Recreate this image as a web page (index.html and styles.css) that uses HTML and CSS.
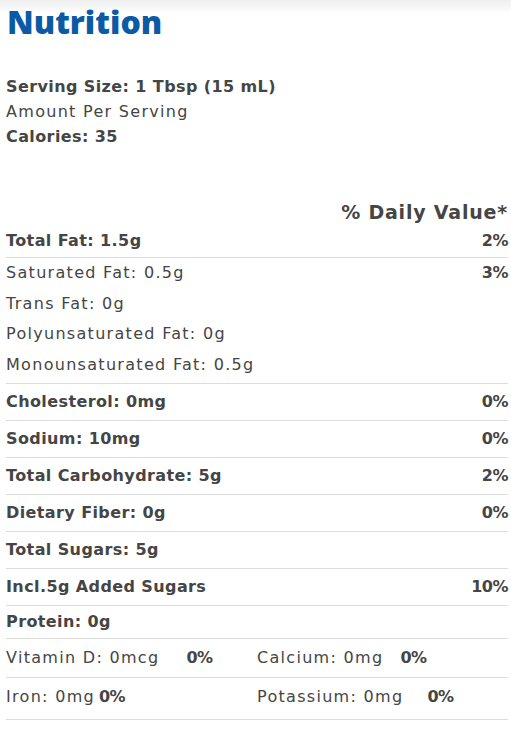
FILE: index.html
```html
<!DOCTYPE html>
<html lang="en">
<head>
<meta charset="utf-8">
<title>Nutrition</title>
<link rel="stylesheet" href="styles.css">
</head>
<body>
<div class="topfade"></div>
<main class="panel">
  <h1 class="title">Nutrition</h1>
  <div class="serving">
    <div class="b">Serving Size: 1 Tbsp (15 mL)</div>
    <div>Amount Per Serving</div>
    <div class="b">Calories: 35</div>
  </div>
  <div class="dv-head">% Daily Value*</div>
  <div class="row row-first"><span class="b">Total Fat: 1.5g</span><span class="b pct">2%</span></div>
  <div class="subgroup">
    <div class="sub"><span>Saturated Fat: 0.5g</span><span class="b pct">3%</span></div>
    <div class="sub"><span>Trans Fat: 0g</span></div>
    <div class="sub"><span>Polyunsaturated Fat: 0g</span></div>
    <div class="sub"><span>Monounsaturated Fat: 0.5g</span></div>
  </div>
  <div class="row"><span class="b">Cholesterol: 0mg</span><span class="b pct">0%</span></div>
  <div class="row"><span class="b">Sodium: 10mg</span><span class="b pct">0%</span></div>
  <div class="row"><span class="b">Total Carbohydrate: 5g</span><span class="b pct">2%</span></div>
  <div class="row"><span class="b">Dietary Fiber: 0g</span><span class="b pct">0%</span></div>
  <div class="row"><span class="b">Total Sugars: 5g</span></div>
  <div class="row"><span class="b">Incl.5g Added Sugars</span><span class="b pct">10%</span></div>
  <div class="row row-protein"><span class="b">Protein: 0g</span></div>
  <div class="row row-vit">
    <div class="cell"><span>Vitamin D: 0mcg</span><span class="b pct gap-vd">0%</span></div>
    <div class="cell"><span>Calcium: 0mg</span><span class="b pct gap-ca">0%</span></div>
  </div>
  <div class="row row-iron">
    <div class="cell"><span>Iron: 0mg</span><span class="b pct gap-fe">0%</span></div>
    <div class="cell"><span>Potassium: 0mg</span><span class="b pct gap-k">0%</span></div>
  </div>
</main>
</body>
</html>
```

FILE: styles.css
```css
html, body {
  margin: 0;
  padding: 0;
  background: #ffffff;
}

body {
  font-family: "DejaVu Sans", "Open Sans", sans-serif;
  font-size: 16px;
  letter-spacing: 1.3px;
  color: #454545;
  position: relative;
}

.topfade {
  position: absolute;
  left: 0;
  right: 0;
  top: 0;
  height: 14px;
  background: linear-gradient(to bottom, #eeeeee, rgba(255,255,255,0));
}

.panel {
  position: relative;
  padding: 0 3px 0 6px;
}

.b {
  font-weight: 700;
  letter-spacing: 0.4px;
}

.title {
  margin: 0;
  font-family: "Open Sans", sans-serif;
  font-size: 32px;
  line-height: 44px;
  font-weight: 800;
  letter-spacing: 0;
  color: #0b5aa5;
  padding-left: 1px;
}

.serving {
  margin-top: 30px;
  line-height: 25px;
}

.dv-head {
  margin-top: 52px;
  text-align: right;
  font-weight: 700;
  font-size: 19px;
  letter-spacing: 0.8px;
  line-height: 22px;
}

.row {
  display: flex;
  justify-content: space-between;
  align-items: center;
  line-height: 20px;
  padding: 8px 0;
  border-bottom: 1px solid #dddddd;
}

.row-first {
  padding: 8px 0 6px;
}

.subgroup {
  padding-bottom: 3px;
  border-bottom: 1px solid #dddddd;
}

.sub {
  display: flex;
  justify-content: space-between;
  align-items: center;
  line-height: 30.5px;
}

.pct {
  letter-spacing: -0.5px;
}

.row-protein {
  padding: 6px 0;
}

.row-vit {
  padding: 9px 0;
  justify-content: flex-start;
}

.row-iron {
  padding: 9px 0 12px;
  justify-content: flex-start;
}

.cell {
  width: 252px;
  display: flex;
  align-items: center;
}

.gap-vd { margin-left: 27px; }
.gap-ca { margin-left: 17px; }
.gap-fe { margin-left: 4px; }
.gap-k { margin-left: 24px; }
```
